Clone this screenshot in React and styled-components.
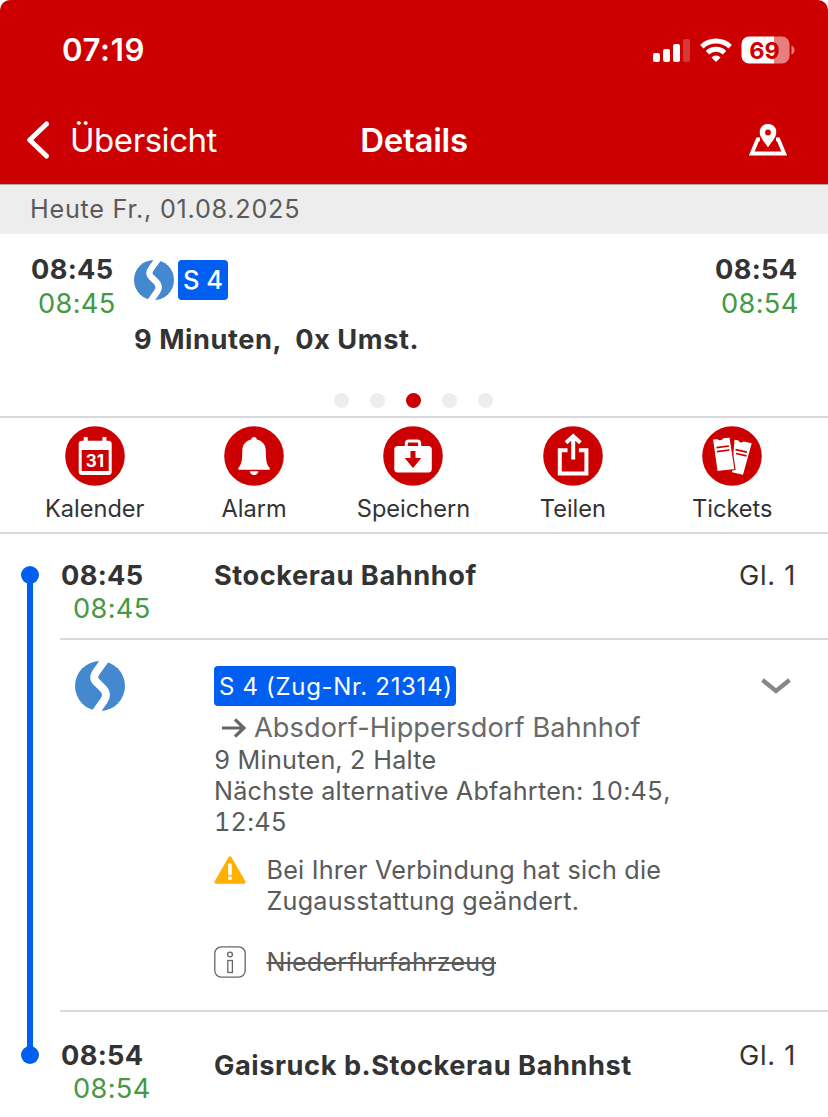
import React from 'react'
import styled, { createGlobalStyle } from 'styled-components';

const GlobalStyle = createGlobalStyle`
    * { box-sizing: border-box; }
    body {
        margin: 0;
        background: #fff;
        color: #333;
        font-family: Inter, "Liberation Sans", sans-serif;
    }
    svg { display: block; flex: none; }
`;

const Screen = styled.div`
    width: 828px;
    height: 1117px;
    overflow: hidden;
    display: flex;
    flex-direction: column;
`;

const Header = styled.header`
    height: 184px;
    flex: none;
    background: #cc0000;
    color: #fff;
    border-radius: 10px 10px 0 0;
`;

const StatusBar = styled.div`
    height: 98px;
    padding: 1px 33px 0 62px;
    display: flex;
    align-items: center;
    justify-content: space-between;
`;

const Text = styled.span`
    font-size: ${({ $size }) => $size || 27.2}px;
    font-weight: ${({ $weight }) => $weight || 400};
    font-variant-numeric: ${({ $tabular }) => ($tabular ? 'tabular-nums' : 'normal')};
    letter-spacing: ${({ $spacing }) => $spacing || 0}px;
    line-height: ${({ $line }) => $line || 34}px;
    white-space: pre;
`;

const StatusIcons = styled.div`
    display: flex;
    align-items: center;
    gap: 9px;
`;

const NavBar = styled.div`
    height: 84px;
    padding: 0 26px;
    display: grid;
    grid-template-columns: 1fr auto 1fr;
    align-items: center;
`;

const Back = styled.div`
    display: flex;
    align-items: center;
    gap: 20px;
`;

const NavAction = styled.div`
    justify-self: end;
    margin-right: 15px;
`;

const DateBar = styled.div`
    height: 50px;
    flex: none;
    padding: 0 0 2px 30px;
    display: flex;
    align-items: center;
    background: #ededed;
    border-top: 1px solid #b5a5a5;
    color: #5a5a5a;
`;

const Summary = styled.section`
    height: 184px;
    flex: none;
    display: flex;
    flex-direction: column;
    border-bottom: 2px solid #dadada;
`;

const SummaryRow = styled.div`
    display: flex;
    height: 159px;
    padding: 19px 31px 0 30px;
`;

const Times = styled.div`
    width: ${({ $width }) => $width}px;
    padding-top: ${({ $top }) => $top || 0}px;
    display: flex;
    flex-direction: column;
`;

const Planned = styled(Text)`
    font-weight: 700;
    letter-spacing: 0.3px;
    padding-left: 1px;
`;

const Realtime = styled(Text)`
    color: #449944;
    letter-spacing: 0.35px;
    padding-left: ${({ $indent }) => $indent}px;
`;

const Trip = styled.div`
    flex: 1;
    padding-top: 7px;
    display: flex;
    flex-direction: column;
    gap: 23px;
`;

const Products = styled.div`
    display: flex;
    gap: 4px;
`;

const LineBadge = styled.span`
    display: inline-flex;
    align-items: center;
    width: ${({ $width }) => $width}px;
    height: 40px;
    padding: ${({ $top }) => $top || 0}px 0 0 5px;
    border-radius: 4px;
    background: #005ff0;
    color: #fff;
`;

const Dots = styled.div`
    display: flex;
    justify-content: center;
    gap: 21px;
    padding-right: 2px;
`;

const Dot = styled.i`
    width: 15px;
    height: 15px;
    border-radius: 50%;
    background: ${({ $active }) => ($active ? '#cc0000' : '#ededed')};
`;

const Actions = styled.nav`
    height: 116px;
    flex: none;
    padding: 8px 16px 0 15px;
    display: grid;
    grid-template-columns: repeat(5, 1fr);
    border-bottom: 2px solid #dadada;
`;

const Action = styled.div`
    display: flex;
    flex-direction: column;
    align-items: center;
    gap: 6px;
`;

const Timeline = styled.main`
    flex: 1;
    display: flex;
`;

const Rail = styled.div`
    width: 60px;
    padding-top: 32px;
    display: flex;
    flex-direction: column;
    align-items: center;
`;

const RailStop = styled.i`
    width: 18px;
    height: 18px;
    border-radius: 50%;
    background: #005ff0;
`;

const RailLine = styled.i`
    width: 6px;
    height: 466px;
    margin: -2px 0;
    background: #005ff0;
`;

const Stops = styled.div`
    flex: 1;
`;

const Row = styled.div`
    height: ${({ $height }) => $height}px;
    display: flex;
    border-bottom: ${({ $last }) => ($last ? 'none' : '2px solid #dadada')};
`;

const StopName = styled.div`
    flex: 1;
    padding-top: ${({ $top }) => $top}px;
`;

const Platform = styled.div`
    padding: ${({ $top }) => $top}px 32px 0 0;
`;

const ProductCell = styled.div`
    width: 154px;
    padding: 21px 0 0 15px;
`;

const Leg = styled.div`
    flex: 1;
    padding-top: 26px;
    display: flex;
    flex-direction: column;
    align-items: flex-start;
    color: #5a5a5a;
`;

const Direction = styled.div`
    display: flex;
    align-items: center;
    gap: 8px;
    height: 39px;
    padding: 4px 0 0 8px;
    color: #696969;
`;

const Notice = styled.div`
    display: flex;
    gap: 20.5px;
    margin-top: ${({ $top }) => $top}px;

    svg {
        margin-top: -1px;
    }
`;

const NoticeText = styled(Text)`
    text-decoration: ${({ $struck }) => ($struck ? 'line-through' : 'none')};
    text-decoration-thickness: 2px;
`;

const Toggle = styled.div`
    padding: 38px 37px 0 0;
`;

const SignalIcon = () => (
    <svg width="38" height="24" viewBox="0 0 38 24" fill="#fff">
        <rect x="0" y="15" width="7" height="9" rx="2" />
        <rect x="10" y="11" width="7" height="13" rx="2" />
        <rect x="20" y="6" width="7" height="18" rx="2" />
        <rect x="30" y="1" width="7" height="23" rx="2" opacity="0.22" />
    </svg>
)

const WifiIcon = () => (
    <svg width="32" height="24" viewBox="0 0 32 24" fill="none" stroke="#fff" strokeWidth="4.8">
        <path d="M1.8 8.7a20.5 20.5 0 0 1 28.4 0" />
        <path d="M7.4 14.7a12.4 12.4 0 0 1 17.2 0" />
        <path d="M16 24l-4.6-4.6a6.6 6.6 0 0 1 9.2 0z" fill="#fff" stroke="none" />
    </svg>
)

const BatteryIcon = () => (
    <svg width="54" height="28" viewBox="0 0 54 28">
        <path d="M8 .5h25v27H8a7.5 7.5 0 0 1-7.5-7.5V8A7.5 7.5 0 0 1 8 .5z" fill="#fff" />
        <path d="M33 .5h8A7.5 7.5 0 0 1 48.5 8v12a7.5 7.5 0 0 1-7.5 7.5h-8z" fill="#fff" opacity="0.5" />
        <path d="M50.5 9.5q3 1.500 3 4.500t-3 4.500z" fill="#fff" opacity="0.5" />
        <text x="23.5" y="22.500" fontSize="23.5" fontWeight="700" fill="#cc0000" textAnchor="middle">69</text>
    </svg>
)

const BackIcon = () => (
    <svg width="24" height="40" viewBox="0 0 24 40" fill="none" stroke="#fff" strokeWidth="5" strokeLinecap="round" strokeLinejoin="round">
        <path d="M20.5 4L3.700 20l16.800 16" />
    </svg>
)

const MapIcon = () => (
    <svg width="38" height="34" viewBox="0 0 38 34">
        <path d="M11 16.300H8.700L2.800 30.500h32.400l-5.900-14.200H27" fill="none" stroke="#fff" strokeWidth="3.800" />
        <path d="M19 .5c-5 0-8.800 3.700-8.800 8.600C10.200 15 15 18.500 19 25.200c4-6.700 8.800-10.200 8.800-16.100C27.800 4.200 24 .5 19 .5z" fill="#fff" stroke="#cc0000" strokeWidth="1" />
        <circle cx="19" cy="9.500" r="2.900" fill="#cc0000" />
    </svg>
)

const SBahnIcon = ({ size }) => (
    <svg width={size} height={size} viewBox="0 0 50 50">
        <circle cx="25" cy="25" r="25" fill="#4488d0" />
        <path d="M31-2.500L22 10C18.300 15 18.300 18 21.500 21.200L28 27.500C31.800 31.500 31.800 35 29 39.500L19.500 53" fill="none" stroke="#fff" strokeWidth="8" />
    </svg>
)

const Disc = ({ children }) => (
    <svg width="60" height="60" viewBox="0 0 60 60">
        <circle cx="30" cy="30" r="29.8" fill="#cc0000" />
        {children}
    </svg>
)

const CalendarIcon = () => (
    <Disc>
        <path d="M17 14.700h1.700V11h4v3.700h14.700V11h4v3.700h2a3.300 3.300 0 0 1 3.300 3.300v27.700a3.300 3.300 0 0 1-3.300 3.300H17a3.300 3.300 0 0 1-3.300-3.300V18a3.300 3.300 0 0 1 3.300-3.300z" fill="#fff" />
        <rect x="16.700" y="24" width="27" height="21" fill="#cc0000" />
        <text x="30" y="41" fontSize="17" fontWeight="700" fill="#fff" textAnchor="middle">31</text>
    </Disc>
)

const BellIcon = () => (
    <Disc>
        <path d="M30 11c-1.700 0-2.700 1-2.700 2.600-5 1.200-8.600 4.800-8.900 9.900-.4 7.500.2 14.500-4 18.200v2h31.300v-2c-4.200-3.700-3.600-10.700-4-18.200-.3-5.100-3.900-8.700-8.900-9.900C32.800 12 31.700 11 30 11z" fill="#fff" />
        <path d="M25.700 45.300h8.700c-.3 2.300-2 3.700-4.300 3.700s-4.100-1.400-4.400-3.700z" fill="#fff" />
    </Disc>
)

const SaveIcon = () => (
    <Disc>
        <path d="M23.300 21v-3.500a2.500 2.500 0 0 1 2.500-2.500h8.400a2.500 2.500 0 0 1 2.500 2.500V21" fill="none" stroke="#fff" strokeWidth="3" />
        <rect x="11.300" y="20" width="37.500" height="26.500" rx="3.500" fill="#fff" />
        <path d="M27.500 25h5v7h5.800L30 42l-8.300-10h5.800z" fill="#cc0000" />
    </Disc>
)

const ShareIcon = () => (
    <Disc>
        <path d="M24.500 24.200H16.800V47.600h26.600V24.200H35.900" fill="none" stroke="#fff" strokeWidth="4" />
        <path d="M30.200 33.500V12M23 16.800l7.200-6.500 7.200 6.500" fill="none" stroke="#fff" strokeWidth="4" />
    </Disc>
)

const TicketsIcon = () => (
    <Disc>
        <path d="M32.500 13.800l4 .7c.5 2 3.700 2.700 5.200 1.100l8 1.700-8.700 31.400-11-2.400z" fill="#fff" />
        <path d="M10.400 12.900l5.200-.6c1 2 4.500 1.700 5.400-.7l7-.7 5 32.600-18 2.100z" fill="#fff" stroke="#cc0000" strokeWidth="1.200" />
        <path d="M14.500 21.700l12.500-1.700M15 25.700l12.500-1.700M33.500 23.700l11.500 2.500M34 27.500l10.500 2.300" stroke="#cc0000" strokeWidth="1.700" />
    </Disc>
)

const ArrowIcon = () => (
    <svg width="24" height="20" viewBox="0 0 24 20" fill="none" stroke="#666" strokeWidth="3.200">
        <path d="M0 10h22M13 1.500l9 8.500-9 8.500" />
    </svg>
)

const ChevronIcon = () => (
    <svg width="30" height="17" viewBox="0 0 30 17" fill="none" stroke="#888" strokeWidth="4.400">
        <path d="M1.500 2L15 13l13.500-11" />
    </svg>
)

const WarningIcon = () => (
    <svg width="32" height="32" viewBox="0 0 32 32">
        <path d="M16 4L29.800 28H2.200z" fill="#ffb000" stroke="#ffb000" strokeWidth="3.500" strokeLinejoin="round" />
        <path d="M16 11v8.500" stroke="#fff" strokeWidth="3.800" strokeLinecap="round" />
        <circle cx="16" cy="24.300" r="2" fill="#fff" />
    </svg>
)

const InfoIcon = () => (
    <svg width="32" height="32" viewBox="0 0 32 32" fill="none" stroke="#666" strokeWidth="1.300">
        <rect x=".8" y=".8" width="30.400" height="30.400" rx="6.500" />
        <circle cx="16" cy="8.500" r="2.400" />
        <rect x="13.800" y="14.500" width="4.600" height="12" />
    </svg>
)

const actions = [
    { label: 'Kalender', icon: <CalendarIcon /> },
    { label: 'Alarm', icon: <BellIcon /> },
    { label: 'Speichern', icon: <SaveIcon /> },
    { label: 'Teilen', icon: <ShareIcon /> },
    { label: 'Tickets', icon: <TicketsIcon /> },
]

const App = () => {

    return (
        <Screen>
            <GlobalStyle />
            <Header>
                <StatusBar>
                    <Text $size={31.2} $weight={600} $spacing={0.6}>07:19</Text>
                    <StatusIcons>
                        <SignalIcon />
                        <WifiIcon />
                        <BatteryIcon />
                    </StatusIcons>
                </StatusBar>
                <NavBar>
                    <Back>
                        <BackIcon />
                        <Text $size={33} $spacing={-0.45}>Übersicht</Text>
                    </Back>
                    <Text $size={33} $weight={600} $spacing={-0.3}>Details</Text>
                    <NavAction><MapIcon /></NavAction>
                </NavBar>
            </Header>

            <DateBar>
                <Text $size={25.2} $spacing={0.75}>Heute Fr., 01.08.2025</Text>
            </DateBar>

            <Summary>
                <SummaryRow>
                    <Times $width={104}>
                        <Planned>08:45</Planned>
                        <Realtime $indent={8}>08:45</Realtime>
                    </Times>
                    <Trip>
                        <Products>
                            <SBahnIcon size={40} />
                            <LineBadge $width={50}>
                                <Text $size={25.5} $weight={500}>S 4</Text>
                            </LineBadge>
                        </Products>
                        <Text $weight={700} $spacing={0.55}>9 Minuten,  0x Umst.</Text>
                    </Trip>
                    <Times $width={83}>
                        <Planned>08:54</Planned>
                        <Realtime $indent={7}>08:54</Realtime>
                    </Times>
                </SummaryRow>
                <Dots>
                    {[0, 1, 2, 3, 4].map((i) => <Dot key={i} $active={i === 2} />)}
                </Dots>
            </Summary>

            <Actions>
                {actions.map(({ label, icon }) => (
                    <Action key={label}>
                        {icon}
                        <Text $size={23.6}>{label}</Text>
                    </Action>
                ))}
            </Actions>

            <Timeline>
                <Rail>
                    <RailStop />
                    <RailLine />
                    <RailStop />
                </Rail>
                <Stops>
                    <Row $height={106}>
                        <Times $width={154} $top={24.5}>
                            <Planned $line={33}>08:45</Planned>
                            <Realtime $line={33} $indent={13}>08:45</Realtime>
                        </Times>
                        <StopName $top={25}><Text $weight={700} $spacing={0.55}>Stockerau Bahnhof</Text></StopName>
                        <Platform $top={25}><Text $spacing={0.7}>Gl. 1</Text></Platform>
                    </Row>
                    <Row $height={372}>
                        <ProductCell><SBahnIcon size={50} /></ProductCell>
                        <Leg>
                            <LineBadge $width={242} $top={1}>
                                <Text $size={24} $spacing={0.68}>S 4 (Zug-Nr. 21314)</Text>
                            </LineBadge>
                            <Direction>
                                <ArrowIcon />
                                <Text $spacing={0.07}>Absdorf-Hippersdorf Bahnhof</Text>
                            </Direction>
                            <Text $size={25.2} $line={31} $spacing={0.25} $tabular>{'9 Minuten, 2 Halte\nNächste alternative Abfahrten: 10:45,\n12:45'}</Text>
                            <Notice $top={17}>
                                <WarningIcon />
                                <NoticeText $size={25.2} $line={31} $spacing={0.22}>{'Bei Ihrer Verbindung hat sich die\nZugausstattung geändert.'}</NoticeText>
                            </Notice>
                            <Notice $top={30}>
                                <InfoIcon />
                                <NoticeText $size={25.2} $line={31} $spacing={0.2} $struck>Niederflurfahrzeug</NoticeText>
                            </Notice>
                        </Leg>
                        <Toggle><ChevronIcon /></Toggle>
                    </Row>
                    <Row $height={105} $last>
                        <Times $width={154} $top={26.5}>
                            <Planned $line={33}>08:54</Planned>
                            <Realtime $line={33} $indent={13}>08:54</Realtime>
                        </Times>
                        <StopName $top={37}><Text $weight={700} $spacing={0.55}>Gaisruck b.Stockerau Bahnhst</Text></StopName>
                        <Platform $top={27}><Text $spacing={0.7}>Gl. 1</Text></Platform>
                    </Row>
                </Stops>
            </Timeline>
        </Screen>
    )
}
export default App
